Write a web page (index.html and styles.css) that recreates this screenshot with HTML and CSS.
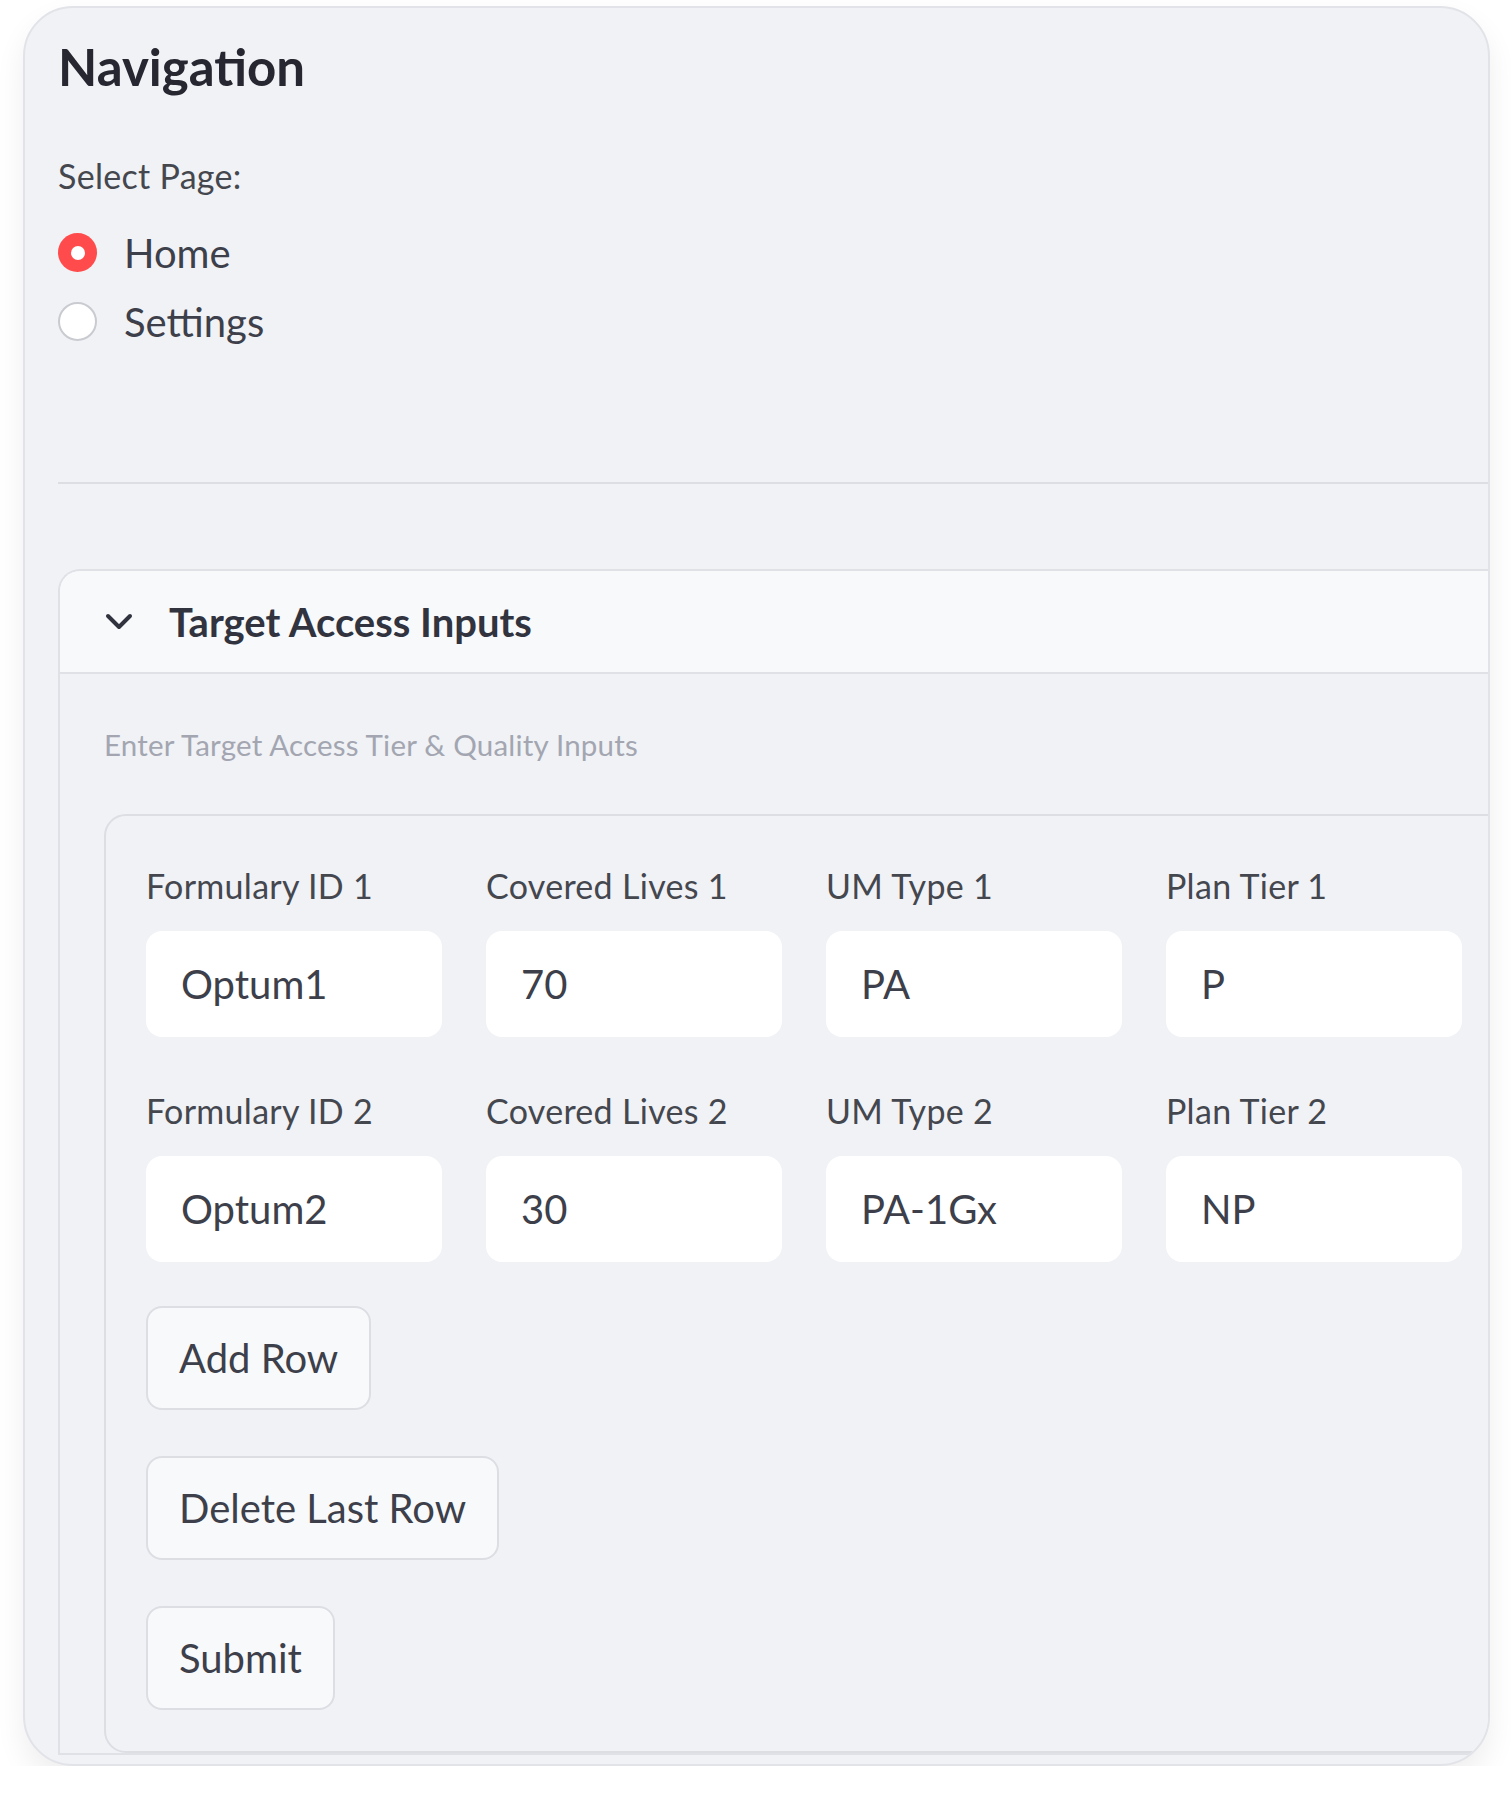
FILE: index.html
```html
<!DOCTYPE html>
<html lang="en">
<head>
<meta charset="utf-8">
<title>Navigation</title>
<link rel="stylesheet" href="styles.css">
</head>
<body>
<div class="card">
  <div class="inner">
    <h2 class="nav-title">Navigation</h2>
    <div class="radio-label">Select Page:</div>
    <div class="radio-group">
      <div class="radio checked"><span class="dot"></span><span class="radio-text">Home</span></div>
      <div class="radio"><span class="dot"></span><span class="radio-text">Settings</span></div>
    </div>
    <div class="divider"></div>
    <div class="expander">
      <div class="exp-head">
        <svg class="chev" width="30" height="20" viewBox="0 0 30 20"><path d="M4 4 L15 15 L26 4" fill="none" stroke="#31333f" stroke-width="4" stroke-linecap="round" stroke-linejoin="round"/></svg>
        <span class="exp-title">Target Access Inputs</span>
      </div>
      <div class="exp-body">
        <p class="caption">Enter Target Access Tier &amp; Quality Inputs</p>
        <div class="form">
          <div class="grid">
            <div class="field"><div class="label">Formulary ID 1</div><div class="input">Optum1</div></div>
            <div class="field"><div class="label">Covered Lives 1</div><div class="input">70</div></div>
            <div class="field"><div class="label">UM Type 1</div><div class="input">PA</div></div>
            <div class="field"><div class="label">Plan Tier 1</div><div class="input">P</div></div>
            <div class="field"><div class="label">Formulary ID 2</div><div class="input">Optum2</div></div>
            <div class="field"><div class="label">Covered Lives 2</div><div class="input">30</div></div>
            <div class="field"><div class="label">UM Type 2</div><div class="input">PA-1Gx</div></div>
            <div class="field"><div class="label">Plan Tier 2</div><div class="input">NP</div></div>
          </div>
          <div class="buttons">
            <button class="btn">Add Row</button>
            <button class="btn">Delete Last Row</button>
            <button class="btn">Submit</button>
          </div>
        </div>
      </div>
    </div>
  </div>
</div>
</body>
</html>
```
FILE: styles.css
```css
* { box-sizing: border-box; }
html, body {
  margin: 0;
  padding: 0;
  background: #ffffff;
  font-family: Lato, "Liberation Sans", sans-serif;
  color: #31333f;
}
.card {
  margin: 6px 0 0 23px;
  width: 1467px;
  height: 1760px;
  border: 2px solid #e2e3e8;
  border-radius: 50px;
  background: #f0f2f6;
  overflow: hidden;
  box-shadow: 0 14px 30px rgba(0, 0, 0, 0.07);
}
.inner {
  width: 1520px;
  padding: 29px 0 0 33px;
}
.nav-title {
  margin: 0;
  font-size: 51px;
  line-height: 60px;
  font-weight: 700;
  color: #262730;
}
.radio-label {
  margin-top: 59px;
  font-size: 34px;
  line-height: 40px;
  letter-spacing: 0.3px;
  color: #45474f;
}
.radio-group {
  margin-top: 22px;
  display: flex;
  flex-direction: column;
}
.radio {
  height: 69px;
  display: flex;
  align-items: center;
  gap: 27px;
}
.dot {
  width: 39px;
  height: 39px;
  border-radius: 50%;
  border: 2px solid #c9cbd1;
  background: #ffffff;
  display: flex;
  align-items: center;
  justify-content: center;
}
.radio.checked .dot {
  border: none;
  background: #ff4b4b;
}
.radio.checked .dot::after {
  content: "";
  width: 14px;
  height: 14px;
  border-radius: 50%;
  background: #ffffff;
}
.radio-text {
  font-size: 40px;
  line-height: 44px;
  color: #3d3f4a;
}
.divider {
  margin-top: 126px;
  height: 2px;
  background: #dcdee3;
}
.expander {
  margin-top: 85px;
  border: 2px solid #dfe1e6;
  border-right: none;
  border-radius: 22px 0 0 0;
  background: #f0f2f6;
}
.exp-head {
  height: 103px;
  display: flex;
  align-items: center;
  padding-left: 44px;
  gap: 35px;
  background: #f8f9fb;
  border-bottom: 2px solid #dfe1e6;
  border-radius: 20px 0 0 0;
}
.exp-title {
  font-size: 40px;
  font-weight: 700;
  color: #31333f;
}
.exp-body {
  padding: 51px 0 0 44px;
}
.caption {
  margin: 0;
  font-size: 29.5px;
  line-height: 40px;
  letter-spacing: 0.2px;
  color: #a3a6b1;
}
.form {
  margin-top: 49px;
  border: 2px solid #dcdee3;
  border-radius: 22px;
  padding: 50px 0 41px 40px;
}
.grid {
  display: grid;
  grid-template-columns: repeat(4, 296px);
  column-gap: 44px;
  row-gap: 54px;
}
.field {
  display: flex;
  flex-direction: column;
  gap: 25px;
}
.label {
  font-size: 34px;
  line-height: 40px;
  letter-spacing: 0.3px;
  color: #45474f;
  white-space: nowrap;
}
.input {
  height: 106px;
  background: #ffffff;
  border-radius: 16px;
  display: flex;
  align-items: center;
  padding-left: 35px;
  font-size: 40px;
  color: #3d3f4a;
}
.buttons {
  margin-top: 44px;
  display: flex;
  flex-direction: column;
  align-items: flex-start;
  gap: 46px;
}
.btn {
  height: 104px;
  padding: 0 31px;
  border: 2px solid #dcdee3;
  border-radius: 16px;
  background: #f8f9fb;
  font-family: Lato, "Liberation Sans", sans-serif;
  font-size: 40px;
  color: #3d3f4a;
}
```
